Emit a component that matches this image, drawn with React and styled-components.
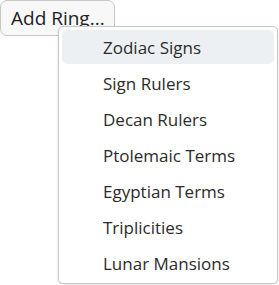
import React from "react";
import styled, { createGlobalStyle } from "styled-components";

const GlobalStyle = createGlobalStyle`
  body {
    margin: 0;
    background: #ffffff;
    font-family: "Open Sans", "Noto Sans", sans-serif;
  }
`;

const Wrapper = styled.div`
  position: relative;
  width: 279px;
  height: 285px;
  overflow: hidden;
`;

const AddButton = styled.button`
  display: flex;
  align-items: center;
  height: 36px;
  width: 115px;
  padding: 0 0 0 10px;
  border: 1px solid #c8c8c8;
  border-radius: 7px;
  background: #f8f8f8;
  color: #222;
  font-family: "Open Sans", "Noto Sans", sans-serif;
  font-size: 19px;
  white-space: nowrap;
  overflow: hidden;
`;

const Menu = styled.ul`
  position: absolute;
  left: 58px;
  top: 26px;
  width: 220px;
  margin: 0;
  padding: 3px;
  box-sizing: border-box;
  list-style: none;
  display: flex;
  flex-direction: column;
  gap: 2px;
  background: #ffffff;
  border: 1px solid #c8c8c8;
  border-radius: 5px;
  box-shadow: 0 1px 3px rgba(0, 0, 0, 0.12);
`;

const Item = styled.li`
  height: 34px;
  display: flex;
  align-items: center;
  padding-left: 41px;
  border-radius: 5px;
  color: #2b2b2b;
  font-size: 17px;
  background: ${(props) => (props.active ? "#edf0f3" : "transparent")};
`;

const rings = [
  "Zodiac Signs",
  "Sign Rulers",
  "Decan Rulers",
  "Ptolemaic Terms",
  "Egyptian Terms",
  "Triplicities",
  "Lunar Mansions",
];

export default function App() {
  return (
    <Wrapper>
      <GlobalStyle />
      <AddButton>Add Ring...</AddButton>
      <Menu>
        {rings.map((name, i) => (
          <Item key={name} active={i === 0}>
            {name}
          </Item>
        ))}
      </Menu>
    </Wrapper>
  );
}
